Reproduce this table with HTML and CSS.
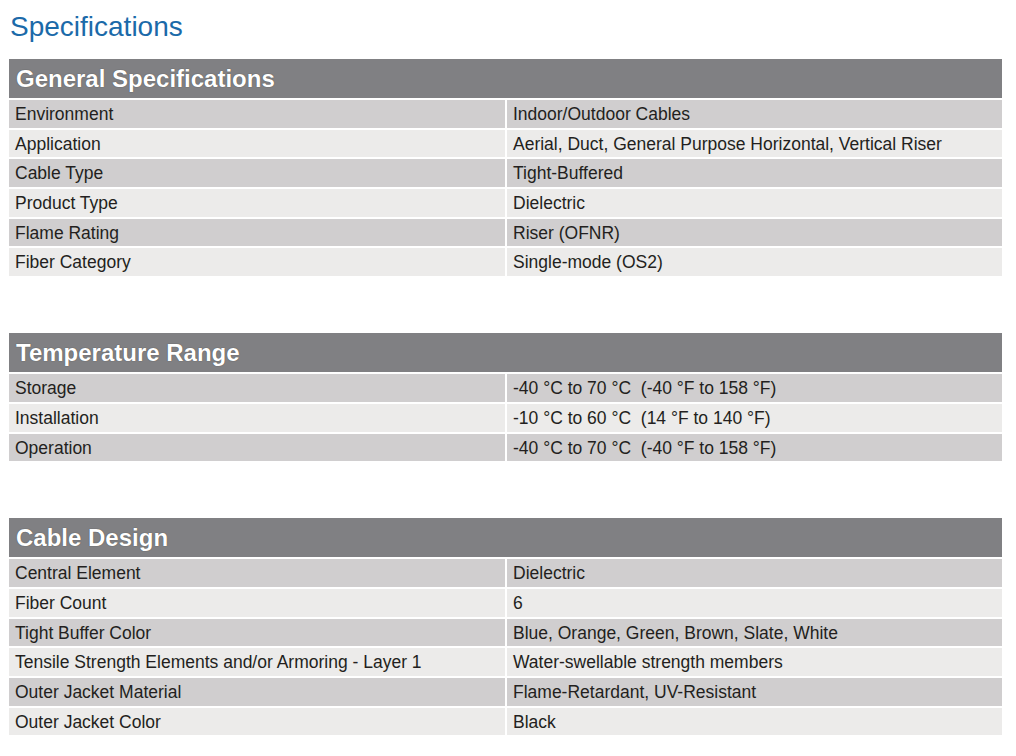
FILE: index.html
```html
<!DOCTYPE html>
<html>
<head>
<meta charset="utf-8">
<link rel="stylesheet" href="styles.css">
</head>
<body>
<h1 class="title">Specifications</h1>

<section class="spec">
  <div class="spec-head">General Specifications</div>
  <div class="row"><div class="cell">Environment</div><div class="cell">Indoor/Outdoor Cables</div></div>
  <div class="row"><div class="cell">Application</div><div class="cell">Aerial, Duct, General Purpose Horizontal, Vertical Riser</div></div>
  <div class="row"><div class="cell">Cable Type</div><div class="cell">Tight-Buffered</div></div>
  <div class="row"><div class="cell">Product Type</div><div class="cell">Dielectric</div></div>
  <div class="row"><div class="cell">Flame Rating</div><div class="cell">Riser (OFNR)</div></div>
  <div class="row"><div class="cell">Fiber Category</div><div class="cell">Single-mode (OS2)</div></div>
</section>

<section class="spec">
  <div class="spec-head">Temperature Range</div>
  <div class="row"><div class="cell">Storage</div><div class="cell">-40 °C to 70 °C&nbsp; (-40 °F to 158 °F)</div></div>
  <div class="row"><div class="cell">Installation</div><div class="cell">-10 °C to 60 °C&nbsp; (14 °F to 140 °F)</div></div>
  <div class="row"><div class="cell">Operation</div><div class="cell">-40 °C to 70 °C&nbsp; (-40 °F to 158 °F)</div></div>
</section>

<section class="spec">
  <div class="spec-head">Cable Design</div>
  <div class="row"><div class="cell">Central Element</div><div class="cell">Dielectric</div></div>
  <div class="row"><div class="cell">Fiber Count</div><div class="cell">6</div></div>
  <div class="row"><div class="cell">Tight Buffer Color</div><div class="cell">Blue, Orange, Green, Brown, Slate, White</div></div>
  <div class="row"><div class="cell">Tensile Strength Elements and/or Armoring - Layer 1</div><div class="cell">Water-swellable strength members</div></div>
  <div class="row"><div class="cell">Outer Jacket Material</div><div class="cell">Flame-Retardant, UV-Resistant</div></div>
  <div class="row"><div class="cell">Outer Jacket Color</div><div class="cell">Black</div></div>
</section>
</body>
</html>
```

FILE: styles.css
```css
html, body {
  margin: 0;
  padding: 0;
  background: #ffffff;
}
body {
  font-family: "Liberation Sans", Arial, sans-serif;
  padding: 0 14px 0 9px;
}
.title {
  margin: 0;
  padding: 10px 0 0 1px;
  height: 59px;
  box-sizing: border-box;
  font-weight: normal;
  font-size: 28px;
  line-height: 34px;
  color: #1b6aa9;
}
.spec {
  margin-bottom: 57px;
}
.spec-head {
  height: 39px;
  background: #808083;
  color: #ffffff;
  font-weight: bold;
  font-size: 24px;
  line-height: 40px;
  padding-left: 7px;
  text-shadow: 0 0 1px #3a3a3a;
}
.row {
  display: grid;
  grid-template-columns: 496px 1fr;
  column-gap: 2px;
  margin-top: 2px;
}
.cell {
  height: 27.7px;
  line-height: 29.5px;
  font-size: 17.5px;
  color: #231f20;
  padding-left: 6px;
  white-space: nowrap;
}
.row:nth-child(even) .cell {
  background: #d0cecf;
}
.row:nth-child(odd) .cell {
  background: #ecebea;
}
```
